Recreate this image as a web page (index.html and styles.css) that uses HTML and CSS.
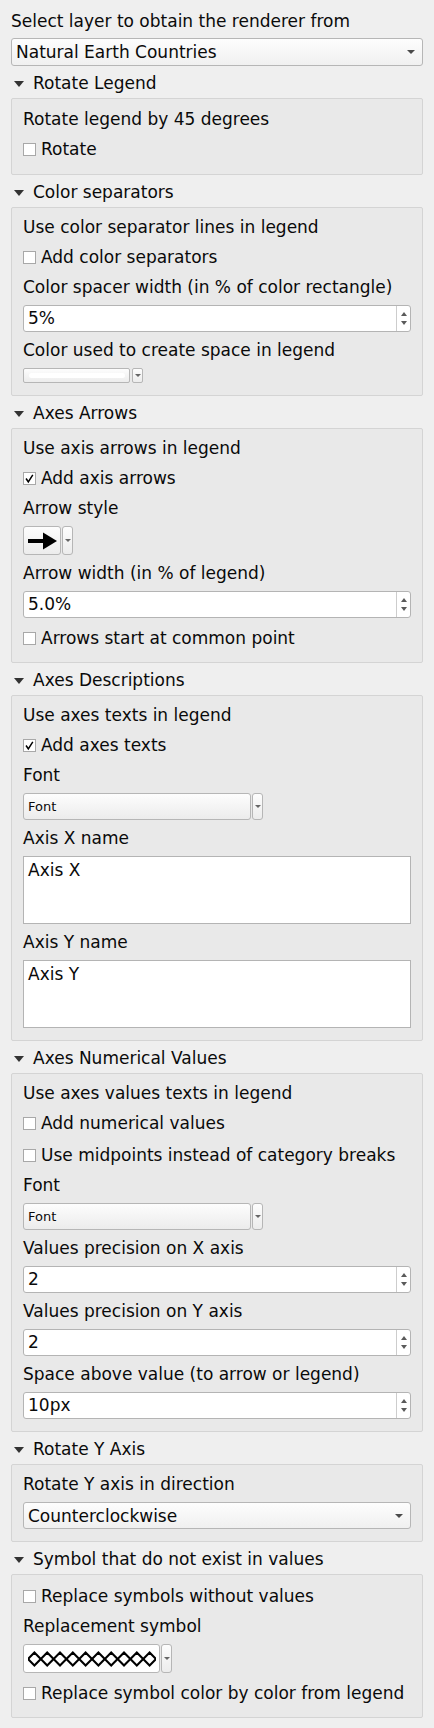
FILE: index.html
```html
<!DOCTYPE html>
<html>
<head>
<meta charset="utf-8">
<link rel="stylesheet" href="styles.css">
</head>
<body>
<div class="page">
  <div class="label">Select layer to obtain the renderer from</div>
  <div class="combo combo-top"><span>Natural Earth Countries</span><span class="caret"></span></div>

  <section class="section">
    <div class="section-head"><span class="tri"></span><span>Rotate Legend</span></div>
    <div class="group group-rotate">
      <div class="label">Rotate legend by 45 degrees</div>
      <div class="check"><span class="cb"></span><span>Rotate</span></div>
    </div>
  </section>

  <section class="section">
    <div class="section-head"><span class="tri"></span><span>Color separators</span></div>
    <div class="group">
      <div class="label">Use color separator lines in legend</div>
      <div class="check"><span class="cb"></span><span>Add color separators</span></div>
      <div class="label">Color spacer width (in % of color rectangle)</div>
      <div class="spin"><span class="val">5%</span><span class="btns"><span class="up"></span><span class="down"></span></span></div>
      <div class="label">Color used to create space in legend</div>
      <div class="split split-color">
        <div class="btn-main color-main"><span class="swatch"></span></div>
        <div class="btn-drop"><span class="mini-caret"></span></div>
      </div>
    </div>
  </section>

  <section class="section">
    <div class="section-head"><span class="tri"></span><span>Axes Arrows</span></div>
    <div class="group">
      <div class="label">Use axis arrows in legend</div>
      <div class="check"><span class="cb checked"><svg viewBox="0 0 11 11" width="11" height="11"><polyline points="2,5.5 4.3,8.8 8.8,1.8" fill="none" stroke="#000" stroke-width="1.5"/></svg></span><span>Add axis arrows</span></div>
      <div class="label">Arrow style</div>
      <div class="split split-arrow">
        <div class="btn-main arrow-main"><svg width="30" height="18" viewBox="0 0 30 18"><rect x="0" y="7" width="18" height="4" fill="#000"/><polygon points="15,0.5 29,9 15,17.5" fill="#000"/></svg></div>
        <div class="btn-drop"><span class="mini-caret"></span></div>
      </div>
      <div class="label">Arrow width (in % of legend)</div>
      <div class="spin"><span class="val">5.0%</span><span class="btns"><span class="up"></span><span class="down"></span></span></div>
      <div class="check"><span class="cb"></span><span>Arrows start at common point</span></div>
    </div>
  </section>

  <section class="section">
    <div class="section-head"><span class="tri"></span><span>Axes Descriptions</span></div>
    <div class="group">
      <div class="label">Use axes texts in legend</div>
      <div class="check"><span class="cb checked"><svg viewBox="0 0 11 11" width="11" height="11"><polyline points="2,5.5 4.3,8.8 8.8,1.8" fill="none" stroke="#000" stroke-width="1.5"/></svg></span><span>Add axes texts</span></div>
      <div class="label">Font</div>
      <div class="split split-font">
        <div class="btn-main font-main"><span>Font</span></div>
        <div class="btn-drop"><span class="mini-caret"></span></div>
      </div>
      <div class="label">Axis X name</div>
      <div class="textedit">Axis X</div>
      <div class="label">Axis Y name</div>
      <div class="textedit">Axis Y</div>
    </div>
  </section>

  <section class="section">
    <div class="section-head"><span class="tri"></span><span>Axes Numerical Values</span></div>
    <div class="group">
      <div class="label">Use axes values texts in legend</div>
      <div class="check"><span class="cb"></span><span>Add numerical values</span></div>
      <div class="check"><span class="cb"></span><span>Use midpoints instead of category breaks</span></div>
      <div class="label">Font</div>
      <div class="split split-font">
        <div class="btn-main font-main"><span>Font</span></div>
        <div class="btn-drop"><span class="mini-caret"></span></div>
      </div>
      <div class="label">Values precision on X axis</div>
      <div class="spin"><span class="val">2</span><span class="btns"><span class="up"></span><span class="down"></span></span></div>
      <div class="label">Values precision on Y axis</div>
      <div class="spin"><span class="val">2</span><span class="btns"><span class="up"></span><span class="down"></span></span></div>
      <div class="label">Space above value (to arrow or legend)</div>
      <div class="spin"><span class="val">10px</span><span class="btns"><span class="up"></span><span class="down"></span></span></div>
    </div>
  </section>

  <section class="section">
    <div class="section-head"><span class="tri"></span><span>Rotate Y Axis</span></div>
    <div class="group">
      <div class="label">Rotate Y axis in direction</div>
      <div class="combo combo-inner"><span>Counterclockwise</span><span class="caret"></span></div>
    </div>
  </section>

  <section class="section">
    <div class="section-head"><span class="tri"></span><span>Symbol that do not exist in values</span></div>
    <div class="group">
      <div class="check"><span class="cb"></span><span>Replace symbols without values</span></div>
      <div class="label">Replacement symbol</div>
      <div class="split split-symbol">
        <div class="btn-main symbol-main"><svg width="128" height="16" viewBox="0 0 128 16"><polyline fill="none" stroke="#000" stroke-width="2.1" points="0,8 6.4,1.5 19.2,14.5 32,1.5 44.8,14.5 57.6,1.5 70.4,14.5 83.2,1.5 96,14.5 108.8,1.5 121.6,14.5 128,8"/><polyline fill="none" stroke="#000" stroke-width="2.1" points="0,8 6.4,14.5 19.2,1.5 32,14.5 44.8,1.5 57.6,14.5 70.4,1.5 83.2,14.5 96,1.5 108.8,14.5 121.6,1.5 128,8"/></svg></div>
        <div class="btn-drop"><span class="mini-caret"></span></div>
      </div>
      <div class="check"><span class="cb"></span><span>Replace symbol color by color from legend</span></div>
    </div>
  </section>
</div>
</body>
</html>
```

FILE: styles.css
```css
html, body {
  margin: 0;
  padding: 0;
}

body {
  background: #efefef;
  font-family: "DejaVu Sans", "Liberation Sans", sans-serif;
  font-size: 17px;
  line-height: 20px;
  color: #0a0a0a;
}

.page {
  display: flex;
  flex-direction: column;
  padding: 11px 11px 12px 11px;
}

.label {
  height: 20px;
  white-space: nowrap;
}

.combo {
  box-sizing: border-box;
  height: 28px;
  border: 1px solid #b6b6b6;
  border-radius: 3px;
  background: linear-gradient(#fdfdfd, #f0f0f0);
  display: flex;
  align-items: center;
  justify-content: space-between;
  padding: 0 7px 0 4px;
  white-space: nowrap;
}

.combo-top {
  margin-top: 7px;
}

.combo-inner {
  height: 27px;
}

.caret {
  width: 0;
  height: 0;
  border-left: 4px solid transparent;
  border-right: 4px solid transparent;
  border-top: 4px solid #4a4a4a;
}

.section {
  display: flex;
  flex-direction: column;
  margin-top: 5px;
}

.section-head {
  height: 24px;
  display: flex;
  align-items: center;
  gap: 9px;
  padding-left: 3px;
  margin-bottom: 3px;
  white-space: nowrap;
}

.tri {
  width: 0;
  height: 0;
  border-left: 5px solid transparent;
  border-right: 5px solid transparent;
  border-top: 6px solid #333;
  margin-top: 1px;
}

.group {
  border: 1px solid #d4d4d4;
  border-radius: 2px;
  background: #e9e9e9;
  padding: 9px 11px 12px 11px;
  display: flex;
  flex-direction: column;
  gap: 8px;
}

.group-rotate {
  padding-top: 10px;
  padding-bottom: 13px;
}

.check {
  height: 24px;
  line-height: 24px;
  display: flex;
  align-items: center;
  gap: 5px;
  white-space: nowrap;
}

.cb {
  box-sizing: border-box;
  width: 13px;
  height: 13px;
  flex: none;
  border: 1px solid #a8a8a8;
  background: #fff;
  display: flex;
  align-items: center;
  justify-content: center;
}

.cb svg {
  display: block;
}

.spin {
  box-sizing: border-box;
  height: 27px;
  border: 1px solid #b4b4b4;
  border-radius: 3px;
  background: #fff;
  display: flex;
}

.spin .val {
  flex: 1;
  padding-left: 4px;
  line-height: 25px;
}

.spin .btns {
  width: 13px;
  border-left: 1px solid #cdcdcd;
  display: flex;
  flex-direction: column;
  align-items: center;
  justify-content: space-between;
  padding: 6px 0 6px 0;
}

.up {
  width: 0;
  height: 0;
  border-left: 3.5px solid transparent;
  border-right: 3.5px solid transparent;
  border-bottom: 4px solid #5a5a5a;
}

.down {
  width: 0;
  height: 0;
  border-left: 3.5px solid transparent;
  border-right: 3.5px solid transparent;
  border-top: 4px solid #5a5a5a;
}

.split {
  display: flex;
  gap: 1px;
  align-self: flex-start;
}

.btn-main, .btn-drop {
  box-sizing: border-box;
  border: 1px solid #b6b6b6;
  border-radius: 3px;
  background: linear-gradient(#fdfdfd, #ececec);
  display: flex;
  align-items: center;
}

.btn-drop {
  width: 11px;
  justify-content: center;
}

.mini-caret {
  width: 0;
  height: 0;
  border-left: 3px solid transparent;
  border-right: 3px solid transparent;
  border-top: 3px solid #666;
}

.split-color .btn-main {
  width: 107px;
  height: 15px;
  padding: 0 4px 0 5px;
  border-radius: 2px;
}

.split-color .btn-drop {
  height: 15px;
  margin-left: 1px;
  border-radius: 2px;
}

.swatch {
  flex: 1;
  height: 5px;
  border-radius: 3px;
  background: #fff;
}

.split-arrow .btn-main {
  width: 38px;
  height: 29px;
  justify-content: center;
  padding-left: 1px;
}

.split-arrow .btn-drop {
  height: 29px;
}

.split-font .btn-main {
  width: 228px;
  height: 27px;
  padding-left: 4px;
  font-size: 13px;
}

.split-font .btn-drop {
  height: 27px;
}

.split-symbol .btn-main {
  width: 137px;
  height: 29px;
  background: #fff;
  padding-left: 4px;
}

.split-symbol .btn-drop {
  height: 29px;
}

.textedit {
  box-sizing: border-box;
  height: 68px;
  border: 1px solid #b4b4b4;
  background: #fff;
  padding: 3px 4px;
}
```
